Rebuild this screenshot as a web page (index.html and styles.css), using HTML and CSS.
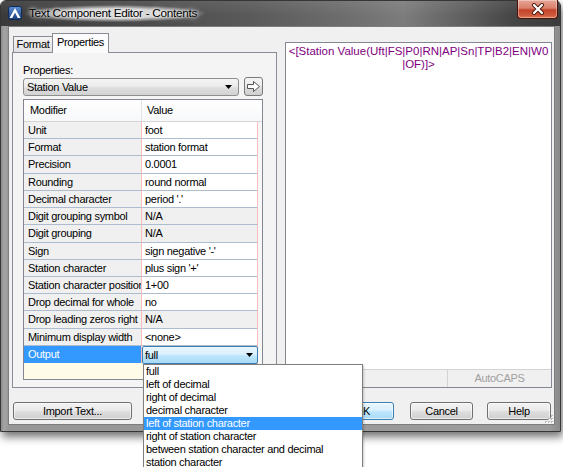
FILE: index.html
```html
<!DOCTYPE html>
<html>
<head>
<meta charset="utf-8">
<link rel="stylesheet" href="styles.css">
</head>
<body>
<div class="window">
  <div class="titlebar">
    <svg class="app-icon" width="14" height="14" viewBox="0 0 14 14">
      <defs><linearGradient id="ig" x1="0" y1="0" x2="0" y2="1"><stop offset="0" stop-color="#5b8fd6"/><stop offset="1" stop-color="#1b3f7a"/></linearGradient></defs>
      <rect x="0.5" y="0.5" width="13" height="13" rx="2" fill="url(#ig)" stroke="#0f2a55"/>
      <polygon points="7,2 12.5,12 9.8,12 7,6.6 4.2,12 1.5,12" fill="#fff"/>
    </svg>
    <span class="title">Text Component Editor - Contents</span>
    <div class="close-btn">
      <svg width="14" height="12" viewBox="0 0 14 12">
        <path d="M3 2 L11 10 M11 2 L3 10" stroke="#4a1a10" stroke-width="4" stroke-linecap="round"/>
        <path d="M3 2 L11 10 M11 2 L3 10" stroke="#fff" stroke-width="2.2" stroke-linecap="round"/>
      </svg>
    </div>
  </div>
  <div class="client">
    <div class="main">
      <div class="tabctl">
        <div class="tabs">
          <div class="tab tab-format">Format</div>
          <div class="tab tab-active">Properties</div>
        </div>
        <div class="tabpanel">
          <div class="label">Properties:</div>
          <div class="prop-row">
            <div class="combo">
              <span>Station Value</span>
              <svg class="caret" width="7" height="4" viewBox="0 0 7 4"><polygon points="0,0 7,0 3.5,4" fill="#000"/></svg>
            </div>
            <div class="arrow-btn">
              <svg width="15" height="13" viewBox="0 0 15 13"><polygon points="1.5,4.5 7.5,4.5 7.5,1.5 13.5,6.5 7.5,11.5 7.5,8.5 1.5,8.5" fill="#fff" stroke="#555" stroke-width="1" stroke-linejoin="round"/></svg>
            </div>
          </div>
          <div class="grid">
            <div class="head">
              <div class="hcell hmod">Modifier</div>
              <div class="hcell">Value</div>
            </div>
            <div class="row"><div class="mod">Unit</div><div class="val">foot</div><div class="pad"></div></div>
            <div class="row"><div class="mod">Format</div><div class="val">station format</div><div class="pad"></div></div>
            <div class="row"><div class="mod">Precision</div><div class="val">0.0001</div><div class="pad"></div></div>
            <div class="row"><div class="mod">Rounding</div><div class="val">round normal</div><div class="pad"></div></div>
            <div class="row"><div class="mod">Decimal character</div><div class="val">period '.'</div><div class="pad"></div></div>
            <div class="row"><div class="mod">Digit grouping symbol</div><div class="val ro">N/A</div><div class="pad"></div></div>
            <div class="row"><div class="mod">Digit grouping</div><div class="val ro">N/A</div><div class="pad"></div></div>
            <div class="row"><div class="mod">Sign</div><div class="val">sign negative '-'</div><div class="pad"></div></div>
            <div class="row"><div class="mod">Station character</div><div class="val">plus sign '+'</div><div class="pad"></div></div>
            <div class="row"><div class="mod">Station character position</div><div class="val">1+00</div><div class="pad"></div></div>
            <div class="row"><div class="mod">Drop decimal for whole</div><div class="val">no</div><div class="pad"></div></div>
            <div class="row"><div class="mod">Drop leading zeros right</div><div class="val ro">N/A</div><div class="pad"></div></div>
            <div class="row"><div class="mod">Minimum display width</div><div class="val">&lt;none&gt;</div><div class="pad"></div></div>
            <div class="row row-sel"><div class="mod sel">Output</div><div class="val edit"><div class="cell-combo"><span>full</span><svg class="caret" width="7" height="4" viewBox="0 0 7 4"><polygon points="0,0 7,0 3.5,4" fill="#000"/></svg></div></div><div class="pad"></div></div>
            <div class="row-new"></div>
          </div>
        </div>
      </div>
      <div class="preview">
        <div class="preview-text">&lt;[Station Value(Uft|FS|P0|RN|AP|Sn|TP|B2|EN|W0<br>|OF)]&gt;</div>
        <div class="status">
          <div class="status-left"></div>
          <div class="autocaps">AutoCAPS</div>
        </div>
      </div>
    </div>
    <div class="buttons">
      <div class="btn btn-import">Import Text...</div>
      <div class="btn btn-ok">OK</div>
      <div class="btn btn-cancel">Cancel</div>
      <div class="btn btn-help">Help</div>
    </div>
    <svg class="grip" width="10" height="10" viewBox="0 0 10 10">
      <g fill="#b8b8b8"><rect x="8" y="2" width="2" height="2"/><rect x="5" y="5" width="2" height="2"/><rect x="8" y="5" width="2" height="2"/><rect x="2" y="8" width="2" height="2"/><rect x="5" y="8" width="2" height="2"/><rect x="8" y="8" width="2" height="2"/></g>
      <g fill="#ffffff"><rect x="9" y="3" width="1" height="1"/><rect x="6" y="6" width="1" height="1"/><rect x="9" y="6" width="1" height="1"/><rect x="3" y="9" width="1" height="1"/><rect x="6" y="9" width="1" height="1"/><rect x="9" y="9" width="1" height="1"/></g>
    </svg>
  </div>
</div>
<div class="droplist">
  <div class="item">full</div>
  <div class="item">left of decimal</div>
  <div class="item">right of decimal</div>
  <div class="item">decimal character</div>
  <div class="item item-sel">left of station character</div>
  <div class="item">right of station character</div>
  <div class="item">between station character and decimal</div>
  <div class="item">station character</div>
</div>
</body>
</html>
```

FILE: styles.css
```css
* { box-sizing: border-box; }
html, body { margin: 0; padding: 0; background: #fff; }
body {
  font-family: "Liberation Sans", Arial, sans-serif;
  font-size: 11px;
  letter-spacing: -0.3px;
  color: #000;
  width: 563px;
  height: 467px;
  overflow: hidden;
  position: relative;
}

.window {
  width: 561px;
  height: 432px;
  border: 1px solid #363636;
  border-radius: 6px 6px 0 0;
  background: linear-gradient(to right, #8a8a8a 0, #a4a4a4 3px, #979797 8px, #9c9c9c 98%, #8a8a8a 100%);
  box-shadow: 2px 5px 9px rgba(0,0,0,0.55);
  display: flex;
  flex-direction: column;
}

.titlebar {
  height: 25px;
  display: flex;
  align-items: flex-start;
  border-radius: 5px 5px 0 0;
  background:
    linear-gradient(to bottom, rgba(255,255,255,0.08), rgba(0,0,0,0) 60%),
    linear-gradient(to right, #3a3a3a 0%, #4b4b4b 25%, #5a5a5a 45%, #6e6e6e 62%, #7c7c7c 72%, #5c5c5c 84%, #444 92%, #3c3c3c 100%);
}
.app-icon { margin: 5px 0 0 7px; flex: none; }
.title {
  margin: 4px 0 0 3px;
  padding: 1px 8px 2px 4px;
  font-size: 11.8px;
  letter-spacing: -0.3px;
  line-height: 14px;
  color: #000;
  background: radial-gradient(ellipse at center, rgba(235,235,235,0.85) 40%, rgba(235,235,235,0) 72%);
  text-shadow: 0 0 6px #fff, 0 0 3px #fff;
}
.close-btn {
  margin: -1px 2px 0 auto;
  width: 41px;
  height: 19px;
  border: 1px solid #4a1208;
  border-top: none;
  border-radius: 0 0 4px 4px;
  background: linear-gradient(to bottom, #e8a596 0%, #d8806c 45%, #c2432a 55%, #cf5a3e 85%, #e07a55 100%);
  box-shadow: inset 0 0 0 1px rgba(255,255,255,0.35);
  display: flex;
  align-items: center;
  justify-content: center;
}

.client {
  flex: 1;
  margin: 0 5px 6px 7px;
  background: #f0f0f0;
  border: 1px solid #7d7d7d;
  padding: 6px 2px 4px 3px;
  display: flex;
  flex-direction: column;
  position: relative;
}

.main { height: 355px; display: flex; }

.tabctl { width: 265px; display: flex; flex-direction: column; }
.tabs { height: 19px; display: flex; align-items: flex-end; padding-left: 1px; position: relative; z-index: 1; }
.tab {
  border: 1px solid #898c95;
  border-bottom: none;
  text-align: center;
}
.tab-format {
  width: 40px;
  height: 16px;
  line-height: 15px;
  background: linear-gradient(#f3f3f3, #e1e1e1);
}
.tab-active {
  width: 57px;
  height: 20px;
  margin-left: -1px;
  margin-bottom: -1px;
  line-height: 17px;
  background: #fbfbfb;
}
.tabpanel {
  flex: 1;
  border: 1px solid #898c95;
  background: #f4f4f4;
  padding: 10px 0 0 10px;
}
.label { height: 14px; line-height: 14px; }
.prop-row { display: flex; align-items: center; height: 19px; margin-top: 0; }
.combo {
  width: 216px;
  height: 18px;
  border: 1px solid #8e8f8f;
  border-radius: 3px;
  background: linear-gradient(to bottom, #f4f4f4 0%, #ececec 45%, #dedede 55%, #d3d3d3 100%);
  display: flex;
  align-items: center;
  justify-content: space-between;
  padding: 0 6px 0 3px;
}
.arrow-btn {
  width: 19px;
  height: 19px;
  margin-left: 5px;
  border: 1px solid #7a7a7a;
  border-radius: 3px;
  background: linear-gradient(to bottom, #f4f4f4 0%, #ebebeb 45%, #dddddd 55%, #cfcfcf 100%);
  display: flex;
  align-items: center;
  justify-content: center;
}

.grid {
  margin-top: 3px;
  width: 240px;
  height: 281px;
  border: 1px solid #828790;
  background: #fff;
  display: flex;
  flex-direction: column;
}
.head {
  height: 22px;
  display: grid;
  grid-template-columns: 118px 1fr;
  background: linear-gradient(#ffffff, #f7f8fa);
  border-bottom: 1px solid #d5d5d5;
  flex: none;
}
.hcell { line-height: 21px; padding-left: 6px; }
.hcell.hmod { border-right: 1px solid #e3e4e6; }
.hcell + .hcell { padding-left: 5px; }

.row {
  height: 17.23px;
  flex: none;
  display: grid;
  grid-template-columns: 118px 116px 1fr;
}
.mod, .val {
  border-bottom: 1px solid #adbdcf;
  border-right: 1px solid #ffbcbc;
  white-space: nowrap;
  overflow: hidden;
  line-height: 16px;
}
.mod { background: #f0f0f0; padding-left: 4px; }
.val { background: #fff; padding-left: 3px; }
.val.ro { background: #f0f0f0; }
.pad { background: #f7f7f7; }
.mod.sel { background: #3399ff; color: #fff; }
.val.edit { overflow: visible; padding: 0; border-bottom: none; position: relative; }
.cell-combo {
  height: 18px;
  margin-right: -1px;
  border: 1px solid #3c7fb1;
  border-radius: 2px;
  background: linear-gradient(to bottom, #eaf6fd 0%, #d9f0fc 45%, #bee6fd 55%, #a7d9f5 100%);
  display: flex;
  align-items: center;
  justify-content: space-between;
  padding: 0 4px 0 2px;
}
.row-new { flex: 1; background: #fffbe9; }

.preview {
  margin: 9px 0 0 8px;
  width: 267px;
  height: 346px;
  border: 1px solid #828790;
  background: #fff;
  display: flex;
  flex-direction: column;
}
.preview-text {
  flex: 1;
  color: #800080;
  text-align: center;
  font-size: 11.5px;
  letter-spacing: 0;
  line-height: 13px;
  padding-top: 2px;
}
.status {
  height: 18px;
  border-top: 1px solid #d3d3d3;
  background: #f0f0f0;
  display: grid;
  grid-template-columns: 162px 1fr;
}
.status-left { border-right: 1px solid #d3d3d3; }
.autocaps { color: #a0a0a0; text-align: center; line-height: 16px; }

.buttons { display: flex; margin-top: 14px; height: 18px; }
.btn {
  height: 18px;
  line-height: 16px;
  text-align: center;
  border: 1px solid #707070;
  border-radius: 3px;
  background: linear-gradient(to bottom, #f2f2f2 0%, #ebebeb 45%, #dddddd 55%, #cfcfcf 100%);
  box-shadow: inset 0 0 0 1px rgba(255,255,255,0.6);
}
.btn-import { width: 119px; margin-left: 1px; }
.btn-ok {
  width: 63px;
  margin-left: auto;
  border-color: #3c7fb1;
  background: linear-gradient(to bottom, #eaf6fd 0%, #d9f0fc 45%, #bee6fd 55%, #a7d9f5 100%);
}
.btn-cancel { width: 63px; margin-left: 16px; }
.btn-help { width: 64px; margin-left: 14px; margin-right: 1px; }

.grip { position: absolute; right: 1px; bottom: 1px; }

.droplist {
  position: absolute;
  left: 143px;
  top: 364px;
  width: 220px;
  height: 120px;
  background: #fff;
  border: 1px solid #7f7f7f;
  box-shadow: 1px 1px 2px rgba(0,0,0,0.2);
}
.item { height: 13px; line-height: 13px; padding-left: 2px; white-space: nowrap; }
.item-sel { background: #3399ff; color: #fff; }
```
